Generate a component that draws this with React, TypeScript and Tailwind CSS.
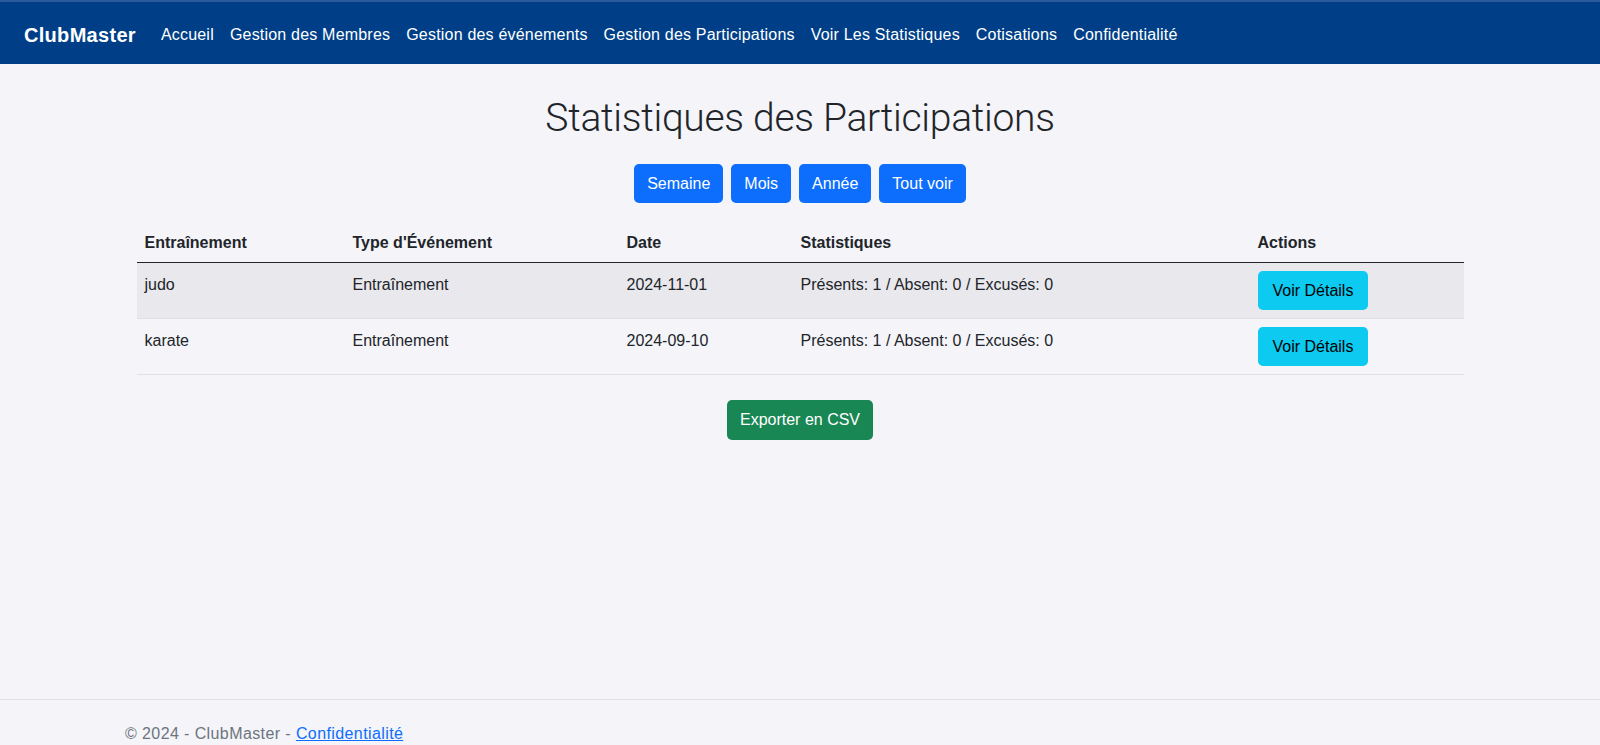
import React from "react";

const links = [
  "Accueil",
  "Gestion des Membres",
  "Gestion des événements",
  "Gestion des Participations",
  "Voir Les Statistiques",
  "Cotisations",
  "Confidentialité",
];

const rows = [
  { name: "judo", type: "Entraînement", date: "2024-11-01", striped: true },
  { name: "karate", type: "Entraînement", date: "2024-09-10", striped: false },
];

export default function App() {
  return (
    <div
      className="min-h-[745px] flex flex-col bg-[#f4f4f9] text-[#212529] text-[16px] leading-[24px]"
      style={{ fontFamily: '"Liberation Sans", Arial, sans-serif' }}
    >
      <nav className="h-[64px] bg-[#003f88] border-t-2 border-[#2a5a9a] flex items-center pl-[24px] pt-[3px]">
        <span className="text-white font-bold text-[20px] tracking-[0.3px] mr-[17px]">ClubMaster</span>
        <div className="flex items-center">
          {links.map((l) => (
            <a key={l} className="px-2 text-white text-[16px] tracking-[0.2px]">
              {l}
            </a>
          ))}
        </div>
      </nav>

      <main className="flex-1 flex flex-col items-center pt-[24px]">
        <h1
          className="text-[39px] leading-[60px] font-light tracking-[-0.3px] text-[#212529]"
          style={{ fontFamily: 'Roboto, sans-serif' }}
        >
          Statistiques des Participations
        </h1>
        <div className="flex gap-2 mt-[16px]">
          {["Semaine", "Mois", "Année", "Tout voir"].map((b) => (
            <button
              key={b}
              className="h-[39px] px-[13px] rounded-[5px] bg-[#0d6efd] text-white"
            >
              {b}
            </button>
          ))}
        </div>

        <table className="table-fixed w-[1327px] mt-[20px] border-collapse text-left">
          <colgroup>
            <col className="w-[208px]" />
            <col className="w-[274px]" />
            <col className="w-[174px]" />
            <col className="w-[457px]" />
            <col className="w-[214px]" />
          </colgroup>
          <thead>
            <tr className="border-b border-[#212529]">
              <th className="px-2 pt-[8px] pb-[7px] font-bold">Entraînement</th>
              <th className="px-2 pt-[8px] pb-[7px] font-bold">Type d'Événement</th>
              <th className="px-2 pt-[8px] pb-[7px] font-bold">Date</th>
              <th className="px-2 pt-[8px] pb-[7px] font-bold">Statistiques</th>
              <th className="px-2 pt-[8px] pb-[7px] font-bold">Actions</th>
            </tr>
          </thead>
          <tbody>
            {rows.map((r) => (
              <tr
                key={r.name}
                className={
                  "border-b border-[#dee2e6] " + (r.striped ? "bg-[#e8e8ed]" : "")
                }
              >
                <td className="px-2 pt-[10px] pb-2 align-top">{r.name}</td>
                <td className="px-2 pt-[10px] pb-2 align-top">{r.type}</td>
                <td className="px-2 pt-[10px] pb-2 align-top">{r.date}</td>
                <td className="px-2 pt-[10px] pb-2 align-top">
                  Présents: 1 / Absent: 0 / Excusés: 0
                </td>
                <td className="px-2 pt-2 pb-[8px] align-top">
                  <button className="h-[39px] px-[15px] rounded-[5px] bg-[#0dcaf0] text-[#000]">
                    Voir Détails
                  </button>
                </td>
              </tr>
            ))}
          </tbody>
        </table>

        <button className="mt-[25px] h-[40px] px-[13px] rounded-[5px] bg-[#198754] text-white">
          Exporter en CSV
        </button>
      </main>

      <footer className="border-t border-[#dee2e6] h-[46px] pl-[125px] pt-[22px] text-[#6c757d] leading-[24px] tracking-[0.4px]">
        © 2024 - ClubMaster -{" "}
        <a className="text-[#0d6efd] underline">Confidentialité</a>
      </footer>
    </div>
  );
}
